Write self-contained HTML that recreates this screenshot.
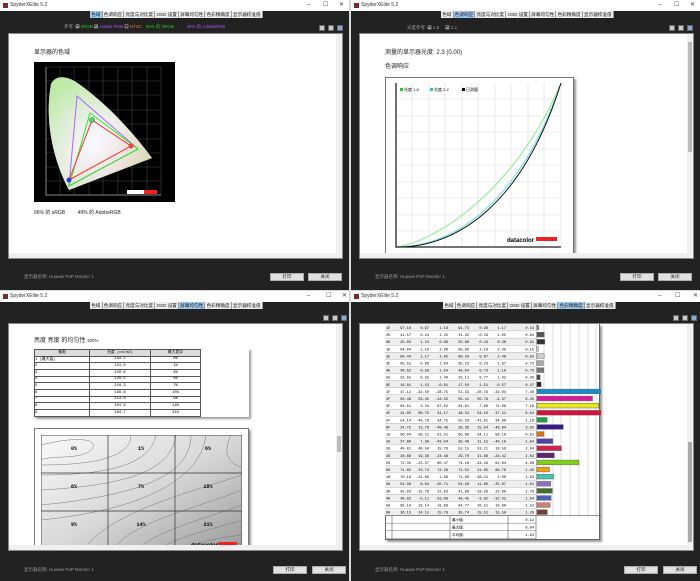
<!DOCTYPE html><html><head><meta charset="utf-8"><style>
*{margin:0;padding:0;box-sizing:border-box}
body{width:700px;height:581px;background:#d8d8d8;position:relative;overflow:hidden;font-family:"Liberation Sans","Noto Sans CJK SC",sans-serif}
.w{position:absolute;width:349px;height:290px;background:#222;overflow:hidden}
.tb{position:absolute;left:0;top:0;width:100%;height:11px;background:#fff;font-size:5px;line-height:11px;padding-left:10px;color:#333}
.tb:before{content:"";position:absolute;left:3px;top:3px;width:5px;height:5px;background:#7a2a2a}
.tb .c{position:absolute;top:0;font-size:6px;color:#444}
.tabs{position:absolute;top:11px;left:90px;height:7px;display:flex;background:#eee}
.tabs span{font-size:4.6px;line-height:7px;padding:0 1.2px;border-right:1px solid #999;color:#222;white-space:nowrap}
.tabs span.a{background:#9cc8f0}
.ic{position:absolute;top:25px;width:6px;height:6px;background:#ccc;border:1px solid #666}
.pn{position:absolute;left:8px;top:33px;width:335px;height:226px;background:#fff;overflow:hidden;border:1px solid #888}
.sb{position:absolute;right:0;top:0;width:6px;height:100%;background:#f0f0f0}
.hb{position:absolute;left:0;bottom:0;width:100%;height:5px;background:#f0f0f0}
.ft{position:absolute;left:24px;top:274px;font-size:4.5px;color:#999}
.bt{position:absolute;top:273px;width:34px;height:8px;background:#e1e1e1;border:1px solid #aaa;font-size:4.5px;text-align:center;line-height:6px;color:#222}
.t{position:absolute;font-size:6px;color:#222;white-space:nowrap}
</style></head><body>

<!-- TL -->
<div class="w" style="left:0;top:0">
<div class="tb">SpyderXElite 5.2<span class="c" style="left:307px">–</span><span class="c" style="left:323px">☐</span><span class="c" style="left:339px">✕</span></div>
<div class="tabs"><span class="a">色域</span><span>色调响应</span><span>亮度与对比度</span><span>OSD 设置</span><span>屏幕均匀性</span><span>色彩精确度</span><span>显示器校准值</span></div>
<div class="t" style="top:24px;left:64px;font-size:4.5px;color:#999">参考: <b style="color:#eee">☑</b> <span style="color:#2c2">sRGB</span> <b style="color:#eee">☑</b> <span style="color:#a5f">Adobe RGB</span> <b style="color:#eee">☐</b> <span style="color:#e73">NTSC</span> &nbsp; <span style="color:#2c2">66% 的 sRGB</span> &nbsp;&nbsp;&nbsp;&nbsp;&nbsp;&nbsp;&nbsp;&nbsp; <span style="color:#a5f">49% 的 AdobeRGB</span></div>
<div class="ic" style="left:319px"></div><div class="ic" style="left:328px"></div><div class="ic" style="left:337px;background:#8ad"></div>
<div class="pn">
<div class="t" style="left:25px;top:13px">显示器的色域</div>
<svg style="position:absolute;left:25px;top:28px" width="141" height="140">
<defs><radialGradient id="g" cx="0.45" cy="0.6" r="0.6"><stop offset="0" stop-color="#fff"/><stop offset="0.4" stop-color="#f3f0ea"/><stop offset="1" stop-color="#c8e8a8"/></radialGradient>
<linearGradient id="g2" x1="0" y1="0" x2="1" y2="1"><stop offset="0" stop-color="#9e9"/><stop offset="0.5" stop-color="#eef"/><stop offset="1" stop-color="#e99"/></linearGradient></defs>
<rect width="141" height="140" fill="#000"/>
<g stroke="#444" stroke-width="0.6">
<path d="M12 5V133M26 5V133M40 5V133M55 5V133M69 5V133M84 5V133M98 5V133M113 5V133M127 5V133M12 5H127M12 19H127M12 33H127M12 48H127M12 62H127M12 77H127M12 91H127M12 105H127M12 119H127M12 133H127"/></g>
<path d="M12 5V133H127" stroke="#888" fill="none"/>
<path d="M35 128 C20 100 10 60 17 22 C22 12 34 14 45 22 C70 40 95 65 118 96 Z" fill="url(#g2)"/>
<path d="M35 128 C20 100 10 60 17 22 C22 12 34 14 45 22 C70 40 95 65 118 96 Z" fill="url(#g)" opacity="0.7"/>
<path d="M43 34L104 87L35 124Z" fill="none" stroke="#a6f" stroke-width="1"/>
<path d="M56 51L104 87L35 124Z" fill="none" stroke="#2e2" stroke-width="1"/>
<path d="M58 58L97 84L35 118Z" fill="none" stroke="#f33" stroke-width="1"/>
<circle cx="58" cy="58" r="2.5" fill="#6c6" stroke="#444" stroke-width=".5"/><circle cx="97" cy="84" r="2.5" fill="#e44"/><circle cx="35" cy="118" r="2.5" fill="#33e"/>
<rect x="93" y="128" width="30" height="4" fill="#fff"/><rect x="110" y="128" width="13" height="4" fill="#e22"/>
</svg>
<div class="t" style="left:25px;top:175px;font-size:5px">66% 的 sRGB &nbsp;&nbsp;&nbsp;&nbsp;&nbsp;&nbsp;&nbsp; 49% 的 AdobeRGB</div>
<div class="hb"></div><div class="sb" style="height:221px"></div>
</div>
<div class="ft">显示器名称: Huawei PaP Monitor 1</div>
<div class="bt" style="left:270px">打印</div><div class="bt" style="left:308px">关闭</div>
</div>

<!-- TR -->
<div class="w" style="left:351px;top:0">
<div class="tb">SpyderXElite 5.2<span class="c" style="left:307px">–</span><span class="c" style="left:323px">☐</span><span class="c" style="left:339px">✕</span></div>
<div class="tabs"><span>色域</span><span class="a">色调响应</span><span>亮度与对比度</span><span>OSD 设置</span><span>屏幕均匀性</span><span>色彩精确度</span><span>显示器校准值</span></div>
<div class="t" style="top:25px;left:56px;font-size:4.5px;color:#999">光度参考: <b style="color:#eee">☑</b> 1.8 &nbsp;&nbsp;&nbsp; <b style="color:#eee">☑</b> 2.2</div>
<div class="ic" style="left:318px"></div><div class="ic" style="left:327px"></div><div class="ic" style="left:336px;background:#8ad"></div>
<div class="pn">
<div class="t" style="left:25px;top:13px">测量的显示器光度: 2.3 (0.00)</div>
<div class="t" style="left:25px;top:27px">色调响应</div>
<div style="position:absolute;left:25px;top:43px;width:189px;height:190px;border:1px solid #777;box-shadow:2px 2px 2px #999;background:#fff"></div>
<svg style="position:absolute;left:35px;top:48px" width="180" height="175">
<g stroke="#ddd" stroke-width="0.6"><path d="M17 1V165M34 1V165M50 1V165M67 1V165M83 1V165M100 1V165M116 1V165M133 1V165M149 1V165M166 1V165M1 17H166M1 34H166M1 50H166M1 67H166M1 83H166M1 100H166M1 116H166M1 133H166M1 149H166"/></g>
<path d="M1 1V165H166" stroke="#222" stroke-width="1.3" fill="none"/>
<path d="M1 165 C40 160 120 110 166 1" stroke="#8e8" stroke-width="1" fill="none"/>
<path d="M1 165 C60 165 125 120 166 1" stroke="#6dd" stroke-width="1" fill="none"/>
<path d="M1 165 C62 166 128 122 166 1" stroke="#111" stroke-width="1" fill="none"/>
<rect x="5" y="6" width="3" height="3" fill="#2c2"/><text x="9" y="9" font-size="4" font-family="Liberation Sans,Noto Sans CJK SC,sans-serif">光度 1.8</text>
<rect x="35" y="6" width="3" height="3" fill="#2cc"/><text x="39" y="9" font-size="4" font-family="Liberation Sans,Noto Sans CJK SC,sans-serif">光度 2.2</text>
<rect x="67" y="6" width="3" height="3" fill="#000"/><text x="71" y="9" font-size="4" font-family="Liberation Sans,Noto Sans CJK SC,sans-serif">已测量</text>
<text x="112" y="160" font-size="6" font-weight="bold" font-family="Liberation Sans,sans-serif">datacolor</text><rect x="141" y="155" width="21" height="4" fill="#e22"/>
</svg>
<div class="hb"></div><div class="sb" style="height:221px"><div style="position:absolute;left:1px;top:8px;width:4px;height:110px;background:#bbb"></div></div>
</div>
<div class="ft">显示器名称: Huawei PaP Monitor 1</div>
<div class="bt" style="left:269px">打印</div><div class="bt" style="left:307px">关闭</div>
</div>

<!-- BL -->
<div class="w" style="left:0;top:291px">
<div class="tb">SpyderXElite 5.2<span class="c" style="left:307px">–</span><span class="c" style="left:326px">☐</span><span class="c" style="left:342px">✕</span></div>
<div class="tabs"><span>色域</span><span>色调响应</span><span>亮度与对比度</span><span>OSD 设置</span><span class="a">屏幕均匀性</span><span>色彩精确度</span><span>显示器校准值</span></div>
<div class="ic" style="left:323px;top:24px"></div><div class="ic" style="left:332px;top:24px"></div><div class="ic" style="left:341px;top:24px;background:#8ad"></div>
<div class="pn" style="top:32px;height:228px">
<div class="t" style="left:25px;top:11px">亮度 亮度 的均匀性 <span style="font-size:4.5px">100%</span></div>
<div style="position:absolute;left:25px;top:24px;width:215px;height:69px;box-shadow:2px 2px 2px #999;background:#fff"></div>
<table style="position:absolute;left:25px;top:25px;border-collapse:collapse;font-size:3.8px;font-family:'Liberation Mono','Noto Sans CJK SC',monospace;background:#fff">
<tr style="background:#ddd"><td style="width:55px;text-align:center;border:1px solid #555;height:6.5px">象限</td><td style="width:61px;text-align:center;border:1px solid #555">亮度 (cd/m2)</td><td style="width:50px;text-align:center;border:1px solid #555">最大差异</td></tr>
<tr><td style="border:1px solid #555;height:6.7px">1 (最大值)</td><td style="border:1px solid #555;text-align:center">234.2</td><td style="border:1px solid #555;text-align:center">0%</td></tr>
<tr><td style="border:1px solid #555;height:6.7px">2</td><td style="border:1px solid #555;text-align:center">231.0</td><td style="border:1px solid #555;text-align:center">1%</td></tr>
<tr><td style="border:1px solid #555;height:6.7px">3</td><td style="border:1px solid #555;text-align:center">220.6</td><td style="border:1px solid #555;text-align:center">6%</td></tr>
<tr><td style="border:1px solid #555;height:6.7px">4</td><td style="border:1px solid #555;text-align:center">220.5</td><td style="border:1px solid #555;text-align:center">6%</td></tr>
<tr><td style="border:1px solid #555;height:6.7px">5</td><td style="border:1px solid #555;text-align:center">218.3</td><td style="border:1px solid #555;text-align:center">7%</td></tr>
<tr><td style="border:1px solid #555;height:6.7px">6</td><td style="border:1px solid #555;text-align:center">199.6</td><td style="border:1px solid #555;text-align:center">15%</td></tr>
<tr><td style="border:1px solid #555;height:6.7px">7</td><td style="border:1px solid #555;text-align:center">214.0</td><td style="border:1px solid #555;text-align:center">9%</td></tr>
<tr><td style="border:1px solid #555;height:6.7px">8</td><td style="border:1px solid #555;text-align:center">201.6</td><td style="border:1px solid #555;text-align:center">14%</td></tr>
<tr><td style="border:1px solid #555;height:6.7px">9</td><td style="border:1px solid #555;text-align:center">184.7</td><td style="border:1px solid #555;text-align:center">21%</td></tr>
</table>
<div style="position:absolute;left:25px;top:104px;width:215px;height:130px;border:1px solid #777;box-shadow:2px 2px 2px #999;background:#fff"></div>
<svg style="position:absolute;left:32px;top:111px" width="201" height="120">
<defs><linearGradient id="cg" x1="0" y1="0" x2="1" y2="1"><stop offset="0" stop-color="#fafafa"/><stop offset="0.5" stop-color="#d8d8d8"/><stop offset="1" stop-color="#999"/></linearGradient></defs>
<rect width="201" height="120" fill="url(#cg)" stroke="#444"/>
<g fill="none" stroke="#777" stroke-width="0.5">
<path d="M0 10C40 0 60 5 50 15C40 25 10 20 0 25"/><path d="M0 30C60 30 90 20 90 0"/><path d="M0 40C80 40 110 25 115 0"/><path d="M0 55C90 50 130 35 135 0"/><path d="M0 70C100 60 150 40 150 0"/><path d="M0 85C100 75 160 45 165 0"/><path d="M40 120C60 80 140 60 201 40"/><path d="M70 120C80 90 150 75 201 55"/><path d="M95 120C100 100 160 85 201 70"/><path d="M115 120C120 105 170 95 201 85"/><path d="M135 120C140 110 175 103 201 100"/><path d="M155 120C160 112 185 110 201 108"/><path d="M190 0C180 20 190 30 201 32"/>
</g>
<path d="M67 0V120M134 0V120M0 38H201M0 76H201" stroke="#333" stroke-width="0.7"/>
<g font-size="5" font-weight="bold" font-family="Liberation Mono,monospace" text-anchor="middle"><text x="33" y="15">0%</text><text x="100" y="15">1%</text><text x="167" y="15">6%</text><text x="33" y="53">6%</text><text x="100" y="53">7%</text><text x="167" y="53">15%</text><text x="33" y="91">9%</text><text x="100" y="91">14%</text><text x="167" y="91">21%</text></g>
<text x="150" y="112" font-size="6" font-weight="bold" font-family="Liberation Sans,sans-serif">datacolor</text><rect x="177" y="107" width="19" height="4" fill="#e22"/>
</svg>
<div class="hb"></div><div class="sb" style="height:223px"><div style="position:absolute;left:1px;top:112px;width:4px;height:16px;background:#bbb"></div></div>
</div>
<div class="ft" style="top:276px">显示器名称: Huawei PaP Monitor 1</div>
<div class="bt" style="left:273px;top:275px">打印</div><div class="bt" style="left:312px;top:275px">关闭</div>
</div>

<!-- BR -->
<div class="w" style="left:351px;top:291px">
<div class="tb">SpyderXElite 5.2<span class="c" style="left:307px">–</span><span class="c" style="left:324px">☐</span><span class="c" style="left:342px">✕</span></div>
<div class="tabs" style="left:92px"><span>色域</span><span>色调响应</span><span>亮度与对比度</span><span>OSD 设置</span><span>屏幕均匀性</span><span class="a">色彩精确度</span><span>显示器校准值</span></div>
<div class="ic" style="left:322px;top:24px"></div><div class="ic" style="left:331px;top:24px"></div><div class="ic" style="left:340px;top:24px;background:#8ad"></div>
<div class="pn" style="top:32px;height:228px">
<div id="tbl" style="position:absolute;left:25px;top:0;width:215px;height:216px;background:#fff;box-shadow:2px 2px 2px #999;border:1px solid #666;border-top:none"></div>
<svg style="position:absolute;left:25px;top:0" width="216" height="216" font-family="Liberation Mono,monospace" font-size="3.6">
<g stroke="#bbb" stroke-width="0.5"><path d="M159 0V193M168 0V193M176 0V193M185 0V193M194 0V193M203 0V193M211 0V193"/></g>
<g stroke="#555" stroke-width="0.6"><path d="M7 0V216M65 0V216M123 0V216M151 0V216"/></g>
<g id="rows"></g>
</svg>
<div class="sb" style="height:223px"><div style="position:absolute;left:1px;top:118px;width:4px;height:100px;background:#aaa"></div></div>
<div class="hb"></div>
</div>
<div class="ft" style="top:276px">显示器名称: Huawei PaP Monitor 1</div>
<div class="bt" style="left:273px;top:275px">打印</div><div class="bt" style="left:312px;top:275px">关闭</div>
</div>
<script>
var d=[["1E","97.16","0.97","1.19","94.73","0.98","1.17","0.19","#999"],["2D","41.57","0.24","1.45","41.32","-0.33","1.05","0.84","#555"],["3D","25.05","1.24","0.08","25.86","0.43","0.30","0.91","#333"],["1E","94.04","2.16","2.60","95.99","2.19","2.45","0.15","#eee"],["2E","80.44","1.17","2.05","80.33","0.67","2.40","0.83","#ccc"],["3E","65.52","0.69","1.84","65.23","0.23","1.87","0.72","#aaa"],["4E","49.62","0.58","1.54","48.94","0.73","1.10","0.79","#777"],["5E","33.55","0.55","1.40","33.11","0.77","1.42","0.36","#444"],["6E","16.81","1.43","-0.81","17.50","1.51","-0.57","0.47","#222"],["1F","47.12","-32.50","-28.75","51.33","-20.79","-32.04","7.48","#1a8bc8"],["2F","50.49","53.45","-13.55","55.41","55.76","-4.37","6.45","#e0189a"],["3F","83.61","3.34","87.02","84.81","-7.09","74.08","7.18","#e8e818"],["4F","41.05","60.75","31.17","48.34","54.10","37.21","8.04","#d8103a"],["5F","54.14","-40.76","34.75","55.33","-41.81","34.80","1.18","#20a040"],["6F","24.75","13.78","-49.48","28.36","15.54","-48.94","3.05","#3a1890"],["1G","60.94","38.21","61.31","60.86","34.11","58.16","0.81","#e07010"],["2G","37.80","7.30","-43.04","39.40","11.15","-40.10","1.84","#5040b0"],["3G","49.81","48.50","15.76","52.15","53.21","18.56","2.84","#d02050"],["4G","28.88","19.36","-24.48","29.70","21.88","-23.42","2.02","#602070"],["5G","72.45","-23.57","60.47","74.18","-34.49","62.84","4.88","#80d018"],["6G","71.65","23.74","72.28","71.52","21.05","66.76","1.45","#f0a010"],["1H","70.19","-31.85","1.98","71.30","-38.21","2.00","1.93","#40c8b0"],["2H","54.38","8.84","-25.71","54.28","11.80","-25.97","1.61","#9070c0"],["3H","42.03","-15.78","22.93","41.88","-18.56","22.60","1.78","#407030"],["4H","48.82","-5.11","-33.08","48.45","-3.62","-32.42","1.64","#5060b0"],["5H","65.10","18.14","18.68","64.77","20.51","18.99","1.52","#d08070"],["6H","36.13","14.15","15.78","35.74","15.51","15.50","1.20","#704030"]];
var s="",y=0,h=7.1;
d.forEach(function(r,i){var yy=y+i*h;
s+='<rect x="0" y="'+yy+'" width="151" height="'+h+'" fill="'+(i%2?'#fff':'#eee')+'"/>';
s+='<line x1="0" x2="151" y1="'+(yy+h)+'" y2="'+(yy+h)+'" stroke="#777" stroke-width="0.5"/>';
s+='<text x="1" y="'+(yy+5)+'">'+r[0]+'</text>';
var xs=[26,44,63,84,103,121,149];for(var k=0;k<7;k++)s+='<text text-anchor="end" x="'+xs[k]+'" y="'+(yy+5)+'">'+r[k+1]+'</text>';
s+='<rect x="152" y="'+(yy+1.2)+'" width="'+Math.max(1,parseFloat(r[7])*8.6)+'" height="'+(h-2.4)+'" fill="'+r[8]+'" stroke="#666" stroke-width="0.5"/>';});
var b=d.length*h;
s+='<line x1="0" x2="216" y1="'+b+'" y2="'+b+'" stroke="#555" stroke-width="0.6"/>';
[["最小值:","0.12"],["最大值:","8.04"],["平均值:","1.94"]].forEach(function(r,i){var yy=b+i*7.5;s+='<text x="67" y="'+(yy+5.5)+'" font-family="Noto Sans CJK SC,sans-serif">'+r[0]+'</text><text x="149" text-anchor="end" y="'+(yy+5.5)+'">'+r[1]+'</text><line x1="0" x2="151" y1="'+(yy+7.5)+'" y2="'+(yy+7.5)+'" stroke="#777" stroke-width="0.5"/>';});
document.getElementById('rows').innerHTML=s;
</script>
</body></html>
